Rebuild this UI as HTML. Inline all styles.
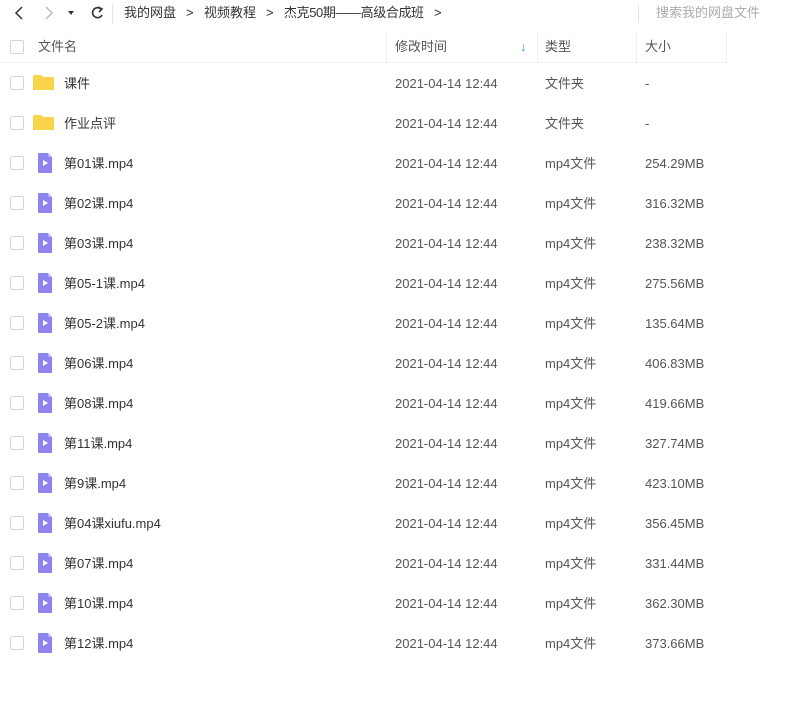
<!DOCTYPE html>
<html><head><meta charset="utf-8"><style>
body{margin:0;width:794px;height:706px;background:#fff;font-family:"Liberation Sans","Noto Sans CJK SC",sans-serif;font-size:13px;color:#333;position:relative;overflow:hidden}
.a{position:absolute;white-space:nowrap;line-height:16px}
.cb{position:absolute;left:10px;width:12px;height:12px;border:1px solid #d6d6d6;border-radius:2px;background:#fff}
.row{position:absolute;left:0;width:794px;height:40px}
.row .t{position:absolute;top:13px;line-height:16px}
.g{color:#555}
</style></head><body>
<svg class="a" style="left:10px;top:4px" width="100" height="20" viewBox="0 0 100 20">
<path d="M12 3 L6 9 L12 15" stroke="#333" stroke-width="1.5" fill="none"/>
<path d="M36 3 L42 9 L36 15" stroke="#bbb" stroke-width="1.5" fill="none"/>
<path d="M58 7 L64 7 L61 11 Z" fill="#333"/>
<path d="M91 5 A5 5 0 1 0 92 11" stroke="#333" stroke-width="1.6" fill="none"/>
<path d="M88 3 L92 5 L89 8" stroke="#333" stroke-width="1.6" fill="none"/>
</svg>
<div class="a" style="left:112px;top:4px;width:1px;height:20px;background:#e5e5e5"></div>
<div class="a" style="left:124px;top:5px">我的网盘</div>
<div class="a" style="left:186px;top:5px">&gt;</div>
<div class="a" style="left:204px;top:5px">视频教程</div>
<div class="a" style="left:266px;top:5px">&gt;</div>
<div class="a" style="left:284px;top:5px;letter-spacing:-0.4px">杰克50期——高级合成班</div>
<div class="a" style="left:434px;top:5px">&gt;</div>
<div class="a" style="left:638px;top:4px;width:1px;height:18px;background:#e5e5e5"></div>
<div class="a" style="left:656px;top:5px;color:#aaa">搜索我的网盘文件</div>
<div class="a" style="left:0;top:32px;width:727px;height:30px;border-bottom:1px solid #eee"></div>
<div class="a" style="left:386px;top:32px;width:1px;height:30px;background:#eee"></div>
<div class="a" style="left:537px;top:32px;width:1px;height:30px;background:#eee"></div>
<div class="a" style="left:636px;top:32px;width:1px;height:30px;background:#eee"></div>
<div class="a" style="left:726px;top:32px;width:1px;height:30px;background:#eee"></div>
<div class="cb" style="top:40px"></div>
<div class="a g" style="left:38px;top:39px">文件名</div>
<div class="a g" style="left:395px;top:39px">修改时间</div>
<div class="a" style="left:520px;top:39px;color:#2b9be8;font-weight:bold">↓</div>
<div class="a g" style="left:545px;top:39px">类型</div>
<div class="a g" style="left:645px;top:39px">大小</div>
<div id="rows"></div>
<script>
var d=[["课件","文件夹","-",1],["作业点评","文件夹","-",1],["第01课.mp4","mp4文件","254.29MB"],["第02课.mp4","mp4文件","316.32MB"],["第03课.mp4","mp4文件","238.32MB"],["第05-1课.mp4","mp4文件","275.56MB"],["第05-2课.mp4","mp4文件","135.64MB"],["第06课.mp4","mp4文件","406.83MB"],["第08课.mp4","mp4文件","419.66MB"],["第11课.mp4","mp4文件","327.74MB"],["第9课.mp4","mp4文件","423.10MB"],["第04课xiufu.mp4","mp4文件","356.45MB"],["第07课.mp4","mp4文件","331.44MB"],["第10课.mp4","mp4文件","362.30MB"],["第12课.mp4","mp4文件","373.66MB"]];
var h="";d.forEach(function(r,i){var y=63+i*40;
var ic=r[3]?'<svg class="a" style="left:33px;top:12px" width="22" height="16"><path d="M0 2 Q0 0 2 0 L8 0 L10 2 L20 2 Q21 2 21 4 L21 15 L0 15Z" fill="#f9d34a"/></svg>':'<svg class="a" style="left:37px;top:10px" width="16" height="21"><path d="M2 0 L11 0 L15 4 L15 19 Q15 20 14 20 L2 20 Q1 20 1 19 L1 1 Q1 0 2 0Z" fill="#8d84ee"/><path d="M11 0 L11 4 L15 4Z" fill="#b7b0f6"/><path d="M6 7 L11 10 L6 13Z" fill="#fff"/></svg>';
h+='<div class="row" style="top:'+y+'px"><div class="cb" style="top:13px"></div>'+ic+'<div class="t" style="left:64px">'+r[0]+'</div><div class="t g" style="left:395px">2021-04-14 12:44</div><div class="t g" style="left:545px">'+r[1]+'</div><div class="t g" style="left:645px">'+r[2]+'</div></div>';});
document.getElementById("rows").innerHTML=h;
</script>
</body></html>
